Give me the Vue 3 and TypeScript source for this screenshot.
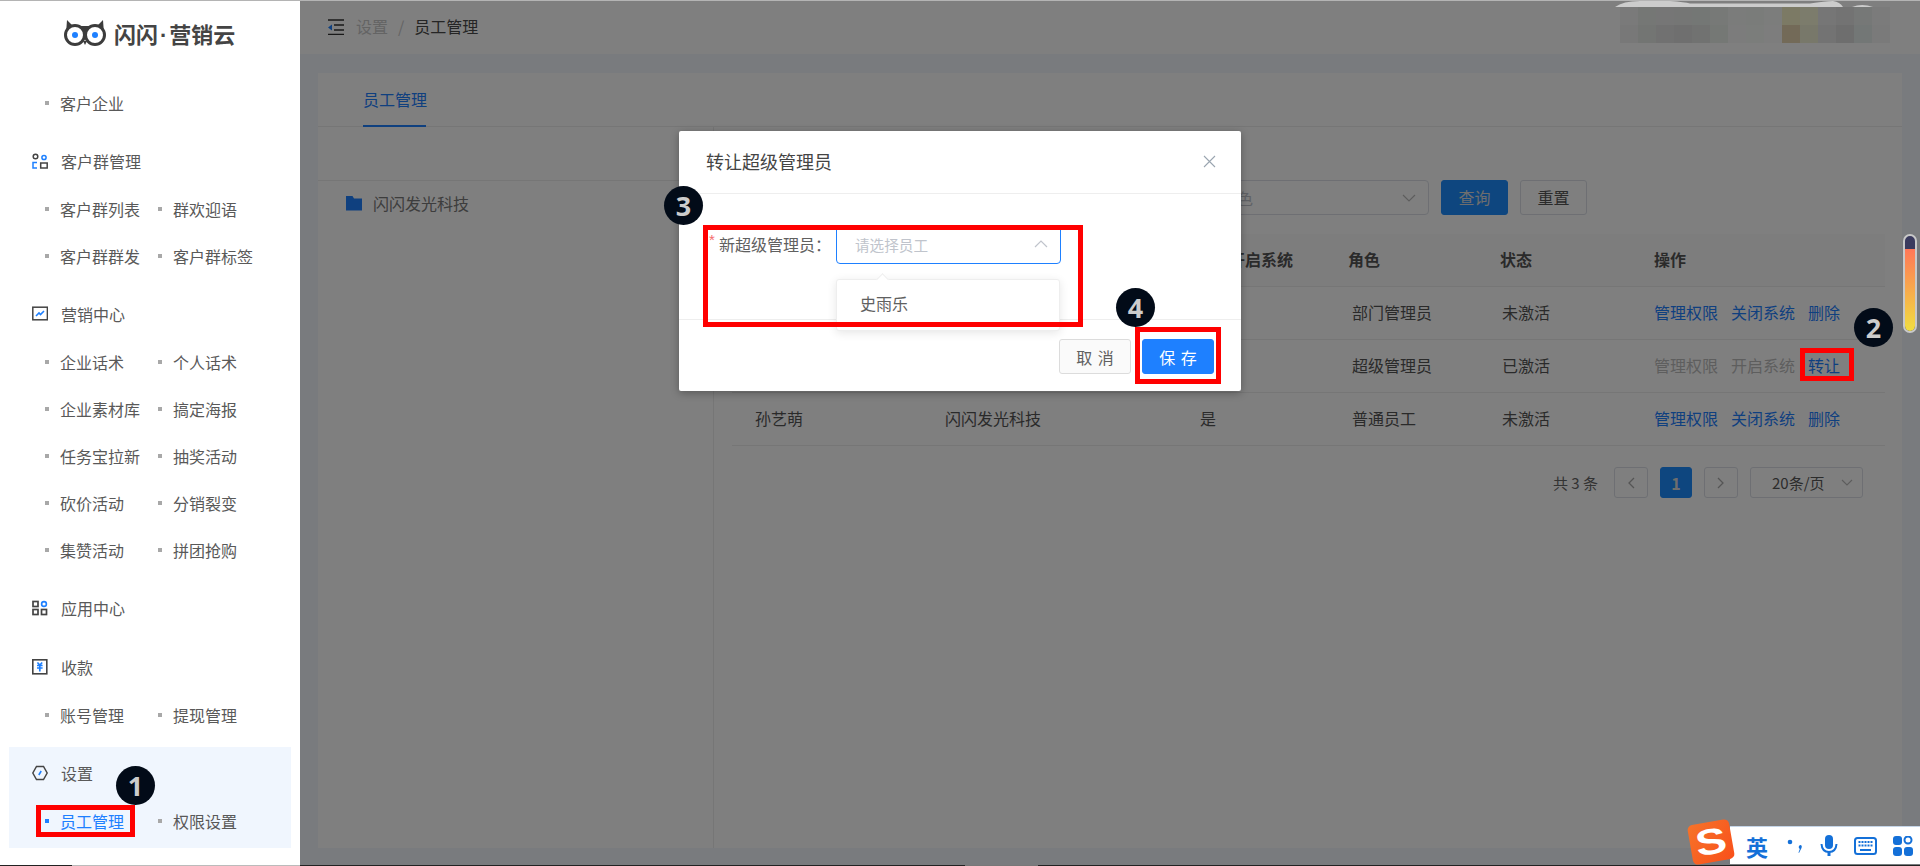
<script setup lang="ts">
interface NavGroup {
  icon?: string;
  title?: string;
  cls?: string;
  items: string[];
}

interface StaffRow {
  name: string;
  dept: string;
  open: string;
  role: string;
  status: string;
  actions: { label: string; off?: boolean }[];
}

const nav: NavGroup[] = [
  { items: ["客户企业"] },
  { icon: "group", title: "客户群管理", items: ["客户群列表", "群欢迎语", "客户群群发", "客户群标签"] },
  {
    icon: "market",
    title: "营销中心",
    items: ["企业话术", "个人话术", "企业素材库", "搞定海报", "任务宝拉新", "抽奖活动", "砍价活动", "分销裂变", "集赞活动", "拼团抢购"],
  },
  { icon: "apps", title: "应用中心", items: [] },
  { icon: "pay", title: "收款", items: ["账号管理", "提现管理"] },
  { icon: "gear", title: "设置", cls: "active", items: ["员工管理", "权限设置"] },
];

const normalActions = [{ label: "管理权限" }, { label: "关闭系统" }, { label: "删除" }];

const staff: StaffRow[] = [
  { name: "史雨乐", dept: "闪闪发光科技", open: "是", role: "部门管理员", status: "未激活", actions: normalActions },
  {
    name: "李明",
    dept: "闪闪发光科技",
    open: "是",
    role: "超级管理员",
    status: "已激活",
    actions: [{ label: "管理权限", off: true }, { label: "开启系统", off: true }, { label: "转让" }],
  },
  { name: "孙艺萌", dept: "闪闪发光科技", open: "是", role: "普通员工", status: "未激活", actions: normalActions },
];

// blurred account block in the top bar, values before the dimming layer
const mosaic = [
  "#f4f4f4", "#eaeeea", "#ececec", "#eaecea", "#e8eeea", "#eef2ee", "#f6f8f6", "#f4f8f4", "#f8faf8", "#f8f4ca", "#f8f8d8", "#ececec", "#e6e6e6", "#ecf0ee", "#f6f6f6",
  "#f0f0f0", "#e6eae6", "#e2e2e2", "#dedede", "#e2e4e2", "#eaf0ea", "#f8f8f8", "#f6faf6", "#fafafa", "#e6d4b0", "#f0f0d4", "#e6e6e6", "#dcdcdc", "#e6eeec", "#f4f4f4",
];
</script>

<template>
  <div class="page">
    <aside class="sidebar">
      <div class="logo">
        <svg width="42" height="26" viewBox="0 0 42 26">
          <path d="M3 0 L9 6 H33 L39 0 L40 14 H2 Z" fill="#3c3c3c" />
          <circle cx="11" cy="15" r="9.5" fill="#fff" stroke="#3c3c3c" stroke-width="3" />
          <circle cx="31" cy="15" r="9.5" fill="#fff" stroke="#3c3c3c" stroke-width="3" />
          <path d="M19 21 L21 25 L23 21 Z" fill="#3c3c3c" />
          <circle cx="11" cy="15" r="3" fill="#1e80ff" />
          <circle cx="31" cy="15" r="3" fill="#1e80ff" />
        </svg>
        <span class="logo-text">闪闪<span class="logo-dot">·</span>营销云</span>
      </div>

      <div v-for="(g, i) in nav" :key="i" class="group" :class="g.cls">
        <div v-if="g.title" class="group-title">
          <svg class="group-icon" width="16" height="16" viewBox="0 0 16 16" fill="none">
            <template v-if="g.icon === 'group'">
              <circle cx="3.5" cy="3.5" r="2.3" stroke="#444" stroke-width="1.5" />
              <circle cx="12" cy="4.5" r="2.1" stroke="#1e80ff" stroke-width="1.5" />
              <path d="M5 9.5 H1 V15 H5" stroke="#1e80ff" stroke-width="1.5" />
              <rect x="8.7" y="10" width="6.5" height="5" stroke="#444" stroke-width="1.5" />
            </template>
            <template v-else-if="g.icon === 'market'">
              <rect x="0.8" y="1.2" width="14.6" height="12.6" stroke="#444" stroke-width="1.5" />
              <path d="M4 10 L7 7 L8.5 8.5 L12 5" stroke="#1e80ff" stroke-width="1.6" />
            </template>
            <template v-else-if="g.icon === 'apps'">
              <rect x="1" y="1.5" width="5" height="5" stroke="#444" stroke-width="1.7" />
              <rect x="1" y="9.5" width="5" height="5" stroke="#444" stroke-width="1.7" />
              <rect x="9.5" y="9.5" width="5" height="5" stroke="#444" stroke-width="1.7" />
              <circle cx="12" cy="4" r="2.4" stroke="#1e80ff" stroke-width="1.6" />
            </template>
            <template v-else-if="g.icon === 'pay'">
              <rect x="0.8" y="0.8" width="14" height="14" stroke="#444" stroke-width="1.6" />
              <path d="M5.400 3.500 L7.800 6 L10.200 3.500 M5 6.500 H10.600 M5 9 H10.600 M7.800 6 V12.500" stroke="#1e80ff" stroke-width="1.7" />
            </template>
            <template v-else>
              <path d="M4.5 1.5 H11.5 L15.2 8 L11.5 14.5 H4.5 L0.8 8 Z" stroke="#444" stroke-width="1.5" />
              <path d="M6.8 10 L9.2 6" stroke="#1e80ff" stroke-width="1.6" />
            </template>
          </svg>
          <span>{{ g.title }}</span>
        </div>
        <div class="rows">
          <div v-for="(item, k) in g.items" :key="item" class="row" :class="{ current: item === '员工管理' && k === 0 }">
            <i class="dot"></i>{{ item }}
          </div>
        </div>
      </div>
    </aside>

    <main class="main">
      <header class="topbar">
        <svg width="16" height="16" viewBox="0 0 16 16">
          <path d="M0 1 H16 M6 6 H16 M6 11 H16 M0 15.5 H16" stroke="#333" stroke-width="1.3" fill="none" />
          <path d="M0 8.5 L4 5.5 V11.5 Z" fill="#1e80ff" />
        </svg>
        <span class="crumb-a">设置</span>
        <span class="crumb-sep">/</span>
        <span class="crumb-b">员工管理</span>
        <div class="mosaic">
          <i v-for="(c, i) in mosaic" :key="i" :style="{ background: c }"></i>
        </div>
      </header>

      <section class="card">
        <div class="tabs"><span class="tab">员工管理</span></div>
        <div class="panes">
          <div class="tree">
            <div class="tree-top"></div>
            <div class="tree-node">
              <svg width="16" height="16" viewBox="0 0 16 16"><path d="M0 1 H6.5 L8 3.5 H16 V15.5 H0 Z" fill="#1e80ff" /></svg>
              闪闪发光科技
            </div>
          </div>
          <div class="content">
            <div class="filters">
              <div class="select">
                <span>角色</span>
                <svg width="14" height="8" viewBox="0 0 14 8"><path d="M1 1 L7 7 L13 1" fill="none" stroke="#bbb" stroke-width="1.2" /></svg>
              </div>
              <button class="btn primary">查询</button>
              <button class="btn">重置</button>
            </div>
            <div class="table">
              <div class="tr th">
                <span>姓名</span><span>所属部门</span><span>是否开启系统</span><span>角色</span><span>状态</span><span>操作</span>
              </div>
              <div v-for="s in staff" :key="s.name" class="tr">
                <span>{{ s.name }}</span>
                <span>{{ s.dept }}</span>
                <span class="td-open">{{ s.open }}</span>
                <span class="td-role">{{ s.role }}</span>
                <span class="td-status">{{ s.status }}</span>
                <span class="ops">
                  <a v-for="a in s.actions" :key="a.label" :class="{ off: a.off }">{{ a.label }}</a>
                </span>
              </div>
            </div>
            <div class="pager">
              <span class="total">共 3 条</span>
              <span class="pg"><svg width="8" height="12" viewBox="0 0 8 12"><path d="M7 1 L2 6 L7 11" fill="none" stroke="#aaa" stroke-width="1.3" /></svg></span>
              <span class="pg on">1</span>
              <span class="pg"><svg width="8" height="12" viewBox="0 0 8 12"><path d="M1 1 L6 6 L1 11" fill="none" stroke="#aaa" stroke-width="1.3" /></svg></span>
              <span class="size">
                20条/页
                <svg width="12" height="7" viewBox="0 0 12 7"><path d="M1 1 L6 6 L11 1" fill="none" stroke="#bbb" stroke-width="1.2" /></svg>
              </span>
            </div>
          </div>
        </div>
      </section>
    </main>

    <div class="mask"></div>

    <svg class="blob" width="270" height="8" viewBox="0 0 270 8">
      <path d="M0 7 Q8 1 25 1 L55 1 Q70 2 75 3.5 L195 3.5 Q210 1 218 1 Q225 2 228 7 Z" fill="#ccc" />
      <path d="M237 7 Q247 3 258 7 Z" fill="#ccc" />
    </svg>

    <div class="modal">
      <div class="modal-head">
        <span>转让超级管理员</span>
        <svg width="13" height="13" viewBox="0 0 13 13"><path d="M1 1 L12 12 M12 1 L1 12" stroke="#9aa5b0" stroke-width="1.1" /></svg>
      </div>
      <div class="modal-body">
        <label class="form-label"><em>*</em><span>新超级管理员：</span></label>
        <div class="picker">
          <span>请选择员工</span>
          <svg width="14" height="8" viewBox="0 0 14 8"><path d="M1 7 L7 1 L13 7" fill="none" stroke="#c0c4cc" stroke-width="1.2" /></svg>
        </div>
        <div class="dropdown"><i class="arrow"></i>史雨乐</div>
      </div>
      <div class="modal-foot">
        <button class="mbtn">取 消</button>
        <button class="mbtn save">保 存</button>
      </div>
    </div>

    <!-- tutorial annotations drawn over the screenshot -->
    <div class="mark m1"></div>
    <div class="mark m2"></div>
    <div class="mark m3"></div>
    <div class="mark m4"></div>
    <div class="badge b1">1</div>
    <div class="badge b2">2</div>
    <div class="badge b3">3</div>
    <div class="badge b4">4</div>

    <div class="scroll-widget"><i></i></div>

    <div class="ime">
      <div class="ime-logo"><span>S</span></div>
      <span class="ime-en">英</span>
      <svg class="ime-punct" width="18" height="18" viewBox="0 0 18 18"><circle cx="4" cy="5" r="2.3" fill="#1470d8" /><path d="M14 8 Q16.5 8 15.5 11 L13 16 L12.5 15.5 L13.8 12 Q11.5 10 14 8 Z" fill="#1470d8" /></svg>
      <svg width="18" height="24" viewBox="0 0 18 24">
        <rect x="5" y="1" width="8" height="14" rx="4" fill="#1470d8" />
        <path d="M1.5 10 Q2 18 9 18 Q16 18 16.500 10" fill="none" stroke="#1470d8" stroke-width="2" />
        <path d="M9 18 V22" stroke="#1470d8" stroke-width="3" />
      </svg>
      <svg width="23" height="18" viewBox="0 0 23 18">
        <rect x="1" y="1" width="21" height="16" rx="2.5" fill="none" stroke="#1470d8" stroke-width="2" />
        <path d="M4.500 5 H18.500 M4.500 8.500 H18.500" stroke="#1470d8" stroke-width="2" stroke-dasharray="2 1" />
        <path d="M6 13 H17" stroke="#1470d8" stroke-width="2" />
      </svg>
      <svg width="20" height="20" viewBox="0 0 20 20" fill="#1470d8">
        <rect x="0" y="0" width="9" height="9" rx="3" />
        <rect x="11.500" y="0.500" width="7" height="7" rx="3.500" fill="none" stroke="#1470d8" stroke-width="2" />
        <rect x="0" y="11" width="9" height="9" rx="3" />
        <rect x="11" y="11" width="9" height="9" rx="3" />
      </svg>
    </div>

    <div class="edge-top"></div>
    <div class="edge-bottom"></div>
  </div>
</template>

<style>
html, body { margin: 0; background: #fff; }
</style>

<style scoped>
.page {
  position: relative;
  display: flex;
  width: 1920px;
  height: 866px;
  overflow: hidden;
  font-family: "Noto Sans CJK SC", "Noto Sans", sans-serif;
  font-size: 16px;
  color: #595959;
}

/* --- Sidebar --- */
.sidebar {
  position: relative;
  z-index: 2;
  flex: 0 0 300px;
  box-sizing: border-box;
  padding: 0 9px;
  background: #fff;
}
.logo {
  display: flex;
  align-items: center;
  height: 80px;
  padding: 0 0 15px 55px;
  box-sizing: border-box;
  gap: 8px;
}
.logo-text {
  font-size: 22px;
  font-weight: 700;
  color: #444;
  white-space: nowrap;
}
.logo-dot {
  font-family: "Liberation Sans", sans-serif;
  margin: 0 2px;
}
.group + .group { margin-top: 11px; }
.group.active {
  margin-top: 8px;
  padding: 3px 0;
  background: #f0f6fe;
}
.group-title {
  display: flex;
  align-items: center;
  height: 48px;
  padding-left: 23px;
  padding-bottom: 2px;
  box-sizing: border-box;
  gap: 13px;
  color: #595959;
}
.rows {
  display: grid;
  grid-template-columns: 113px 113px;
  padding-left: 36px;
}
.row {
  display: flex;
  align-items: center;
  height: 47px;
  padding-bottom: 2px;
  box-sizing: border-box;
  white-space: nowrap;
}
.dot {
  width: 4px;
  height: 4px;
  margin-right: 11px;
  background: #a8a8a8;
  flex: none;
}
.current { color: #1e80ff; }
.current .dot { background: #1e80ff; }

/* --- Main area, dimmed by the mask --- */
.main {
  flex: 1;
  display: flex;
  flex-direction: column;
  min-width: 0;
  background: #f2f6fc;
}
.topbar {
  display: flex;
  align-items: center;
  height: 54px;
  flex: none;
  box-sizing: border-box;
  padding-left: 28px;
  background: #fff;
}
.crumb-a { margin-left: 12px; color: #c8c8c8; }
.crumb-sep { margin: 0 10px; color: #c8c8c8; }
.crumb-a, .crumb-sep, .crumb-b { position: relative; top: -1px; }
.crumb-b { color: #4a4a4a; }
.mosaic {
  display: grid;
  grid-template-columns: repeat(15, 18px);
  grid-auto-rows: 18px;
  margin-left: auto;
  margin-right: 30px;
  align-self: flex-start;
  margin-top: 7px;
}
.card {
  flex: none;
  height: 775px;
  display: flex;
  flex-direction: column;
  margin: 19px 18px 0;
  background: #fff;
}
.tabs {
  height: 54px;
  flex: none;
  box-sizing: border-box;
  padding-left: 45px;
  border-bottom: 1px solid #ececec;
}
.tab {
  display: inline-block;
  width: 63px;
  height: 54px;
  box-sizing: border-box;
  line-height: 52px;
  white-space: nowrap;
  color: #1e80ff;
  border-bottom: 2px solid #1e80ff;
}
.panes { flex: 1; display: flex; min-height: 0; }
.tree {
  flex: 0 0 395px;
  border-right: 1px solid #ececec;
}
.tree-top { height: 53px; border-bottom: 1px solid #ececec; }
.tree-node {
  display: flex;
  align-items: center;
  gap: 11px;
  height: 44px;
  padding-left: 28px;
  color: #7a7a7a;
}
.content { flex: 1; min-width: 0; padding: 53px 17px 0 18px; }
.filters {
  display: flex;
  gap: 12px;
  padding-left: 473px;
  height: 35px;
}
.select {
  display: flex;
  align-items: center;
  justify-content: space-between;
  width: 224px;
  box-sizing: border-box;
  padding: 0 12px 0 15px;
  border: 1px solid #dcdfe6;
  border-radius: 4px;
  color: #c0c4cc;
}
.btn {
  width: 67px;
  height: 35px;
  padding: 0 0 2px;
  font: inherit;
  color: #555;
  background: #fff;
  border: 1px solid #dcdfe6;
  border-radius: 3px;
}
.btn.primary { color: #ddd; background: #1c8cff; border-color: #1c8cff; }
.table { margin-top: 19px; }
.tr {
  display: grid;
  grid-template-columns: 190px 252px 151px 152px 154px 1fr;
  align-items: center;
  height: 53px;
  box-sizing: border-box;
  padding: 0 0 3px 23px;
  border-bottom: 1px solid #ececec;
  color: #555;
  white-space: nowrap;
}
.th {
  font-weight: 700;
  color: #555;
  background: #fbfbfb;
}
.td-open { padding-left: 3px; }
.td-role { padding-left: 4px; }
.td-status { padding-left: 2px; }
.ops { display: flex; gap: 13px; padding-left: 0; }
.ops a { color: #1e80ff; }
.ops a.off { color: #bcbcbc; }
.pager {
  display: flex;
  align-items: center;
  justify-content: flex-end;
  gap: 12px;
  margin-top: 21px;
  padding-right: 22px;
  height: 31px;
}
.total { font-size: 15px; margin-right: 4px; color: #666; }
.pg {
  display: flex;
  align-items: center;
  justify-content: center;
  width: 34px;
  height: 31px;
  box-sizing: border-box;
  border: 1px solid #dcdfe6;
  border-radius: 3px;
}
.pg.on {
  width: 32px;
  color: #ddd;
  font-weight: 700;
  background: #1c8cff;
  border-color: #1c8cff;
}
.size {
  display: flex;
  align-items: center;
  justify-content: space-between;
  width: 113px;
  height: 31px;
  box-sizing: border-box;
  padding: 0 9px 0 21px;
  font-size: 15px;
  border: 1px solid #dcdfe6;
  border-radius: 3px;
}

/* --- Mask and dialog --- */
.mask {
  position: absolute;
  inset: 0;
  left: 300px;
  z-index: 1;
  background: rgba(0, 0, 0, 0.5);
}
.blob { position: absolute; top: 0; left: 1615px; z-index: 2; }
.modal {
  position: absolute;
  z-index: 3;
  top: 131px;
  left: 679px;
  width: 562px;
  height: 260px;
  display: flex;
  flex-direction: column;
  background: #fff;
  border-radius: 2px;
  box-shadow: 0 2px 8px rgba(0, 0, 0, 0.3);
}
.modal-head {
  display: flex;
  align-items: center;
  justify-content: space-between;
  height: 63px;
  flex: none;
  box-sizing: border-box;
  padding: 0 25px 2px 27px;
  font-size: 18px;
  color: #444;
  border-bottom: 1px solid #eee;
}
.modal-body {
  position: relative;
  flex: 1;
  display: flex;
  align-items: flex-start;
  padding: 32px 0 0 30px;
}
.form-label {
  display: flex;
  align-items: center;
  width: 127px;
  height: 36px;
  white-space: nowrap;
  color: #606060;
}
.form-label em {
  align-self: flex-start;
  width: 10px;
  margin-top: 5px;
  font-family: "Liberation Sans", sans-serif;
  font-style: normal;
  font-size: 15px;
  color: #f56c6c;
}
.picker {
  display: flex;
  align-items: center;
  justify-content: space-between;
  width: 225px;
  height: 38px;
  box-sizing: border-box;
  padding: 0 12px 2px 18px;
  font-size: 14.6px;
  color: #c0c4cc;
  border: 1px solid #1e80ff;
  border-radius: 4px;
}
.dropdown {
  position: absolute;
  z-index: 1;
  top: 85px;
  left: 157px;
  width: 224px;
  height: 52px;
  box-sizing: border-box;
  padding: 11px 0 0 23px;
  color: #606060;
  background: #fff;
  border: 1px solid #eee;
  border-radius: 3px;
  box-shadow: 0 2px 10px rgba(0, 0, 0, 0.1);
}
.arrow {
  position: absolute;
  top: -5px;
  left: 41px;
  width: 8px;
  height: 8px;
  background: #fff;
  border-left: 1px solid #eee;
  border-top: 1px solid #eee;
  transform: rotate(45deg);
}
.modal-foot {
  height: 72px;
  flex: none;
  box-sizing: border-box;
  display: flex;
  justify-content: flex-end;
  gap: 11px;
  padding: 19px 27px 0 0;
  border-top: 1px solid #eee;
}
.mbtn {
  width: 72px;
  height: 35px;
  padding: 0;
  font: inherit;
  word-spacing: 2px;
  color: #606060;
  background: #fafafa;
  border: 1px solid #dcdcdc;
  border-radius: 3px;
}
.mbtn.save { color: #fff; background: #1e80ff; border-color: #1e80ff; }

/* --- Annotations --- */
.mark {
  position: absolute;
  z-index: 4;
  box-sizing: border-box;
  border: 5px solid #f00;
}
.m1 { left: 36px; top: 805px; width: 99px; height: 32px; }
.m2 { left: 1800px; top: 348px; width: 54px; height: 33px; }
.m3 { left: 703px; top: 225px; width: 380px; height: 102px; }
.m4 { left: 1135px; top: 327px; width: 86px; height: 57px; }
.badge {
  position: absolute;
  z-index: 5;
  display: flex;
  align-items: center;
  justify-content: center;
  width: 39px;
  height: 39px;
  border-radius: 50%;
  font-family: "Open Sans", sans-serif;
  font-size: 27px;
  font-weight: 700;
  color: #ccc;
  background: #020b18;
}
.b1 { left: 116px; top: 766px; }
.b2 { left: 1854px; top: 308px; }
.b3 { left: 664px; top: 186px; }
.b4 { left: 1116px; top: 288px; }

.scroll-widget {
  position: absolute;
  z-index: 2;
  left: 1903px;
  top: 234px;
  width: 14px;
  height: 99px;
  box-sizing: border-box;
  border: 2px solid #c8c8c8;
  border-radius: 7px;
  overflow: hidden;
  background: #3a3a5e;
}
.scroll-widget i {
  display: block;
  margin-top: 13px;
  height: 84px;
  background: linear-gradient(#ff7757, #f0e040);
}

.ime {
  position: absolute;
  z-index: 6;
  left: 1730px;
  top: 826px;
  width: 190px;
  height: 38px;
  box-sizing: border-box;
  display: flex;
  align-items: center;
  padding-left: 16px;
  gap: 16px;
  background: #fff;
  border-top: 1px solid #c5d5e8;
}
.ime-punct { margin-left: 2px; }
.ime-logo {
  position: absolute;
  left: -40px;
  top: -5px;
  width: 42px;
  height: 40px;
  display: flex;
  align-items: center;
  justify-content: center;
  background: linear-gradient(135deg, #f6732a, #f9501a);
  border-radius: 5px;
  transform: rotate(-10deg);
}
.ime-logo span {
  font-family: "Liberation Sans", sans-serif;
  font-size: 36px;
  font-weight: 700;
  line-height: 1;
  color: #fff;
  transform: scaleX(1.3);
}
.ime-en {
  font-size: 22px;
  font-weight: 700;
  color: #1470d8;
}

.edge-top {
  position: absolute;
  z-index: 7;
  top: 0;
  left: 0;
  right: 0;
  height: 1px;
  background: #b4b4b4;
}
.edge-bottom {
  position: absolute;
  z-index: 7;
  bottom: 0;
  left: 0;
  right: 0;
  height: 1px;
  background: linear-gradient(90deg, #222 72px, #bbb 72px, #bbb 300px, #222 300px, #222 965px, #777 965px, #777 1038px, #222 1038px);
}
</style>
